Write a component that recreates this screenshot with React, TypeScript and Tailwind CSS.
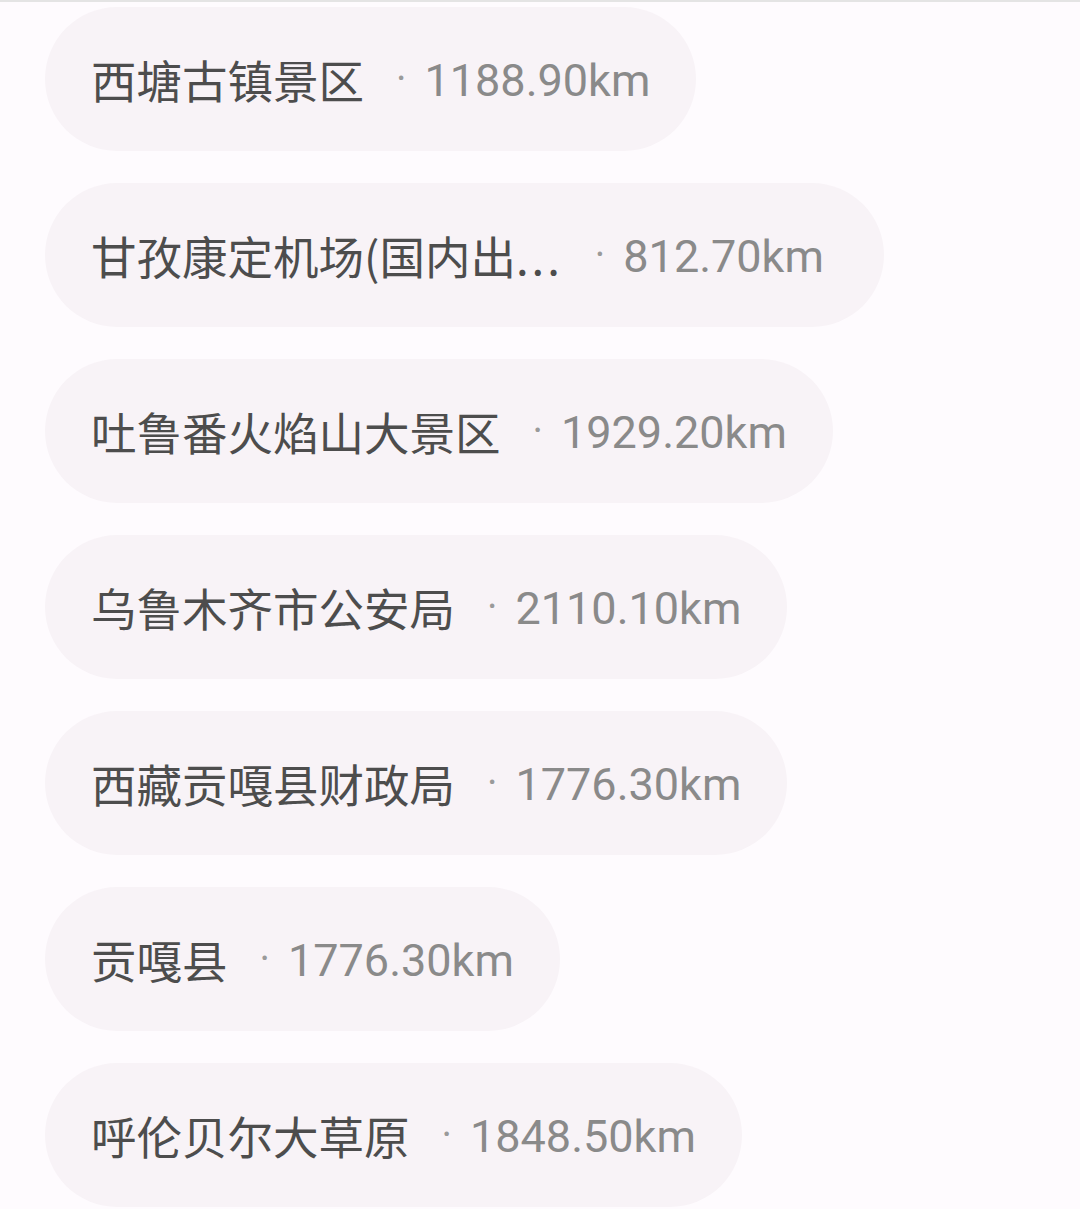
const places = [
  { name: '西塘古镇景区', distance: '1188.90km' },
  { name: '甘孜康定机场(国内出', more: true, distance: '812.70km' },
  { name: '吐鲁番火焰山大景区', distance: '1929.20km' },
  { name: '乌鲁木齐市公安局', distance: '2110.10km' },
  { name: '西藏贡嘎县财政局', distance: '1776.30km' },
  { name: '贡嘎县', distance: '1776.30km' },
  { name: '呼伦贝尔大草原', distance: '1848.50km' },
];

export default function App() {
  return (
    <div className="min-h-[1209px] w-[1080px] border-t-2 border-[#e4e4e4] bg-[#fefbfe]">
      <div className="flex flex-col items-start gap-[32px] pl-[45px] pt-[5px]">
        {places.map((place, i) => (
          <div
            key={i}
            className={`flex h-[144px] items-center rounded-full bg-[#f8f3f7] pl-[46px] ${place.more ? 'pr-[60px]' : 'pr-[46px]'}`}
          >
            <span
              className="whitespace-nowrap text-[45.5px] leading-tight text-[#4d4d4d]"
              style={{ fontFamily: '"Noto Sans CJK SC", sans-serif' }}
            >
              {place.name}
              {place.more && <span className="tracking-[3px]">...</span>}
            </span>
            <span
              className="ml-[32px] mr-[18px] text-[40px] leading-tight text-[#9a9a9a]"
              style={{ fontFamily: 'Roboto, sans-serif' }}
            >
              ·
            </span>
            <span
              className="translate-y-[2px] whitespace-nowrap text-[45px] leading-tight text-[#8a8a8a]"
              style={{ fontFamily: 'Roboto, sans-serif' }}
            >
              {place.distance}
            </span>
          </div>
        ))}
      </div>
    </div>
  );
}
